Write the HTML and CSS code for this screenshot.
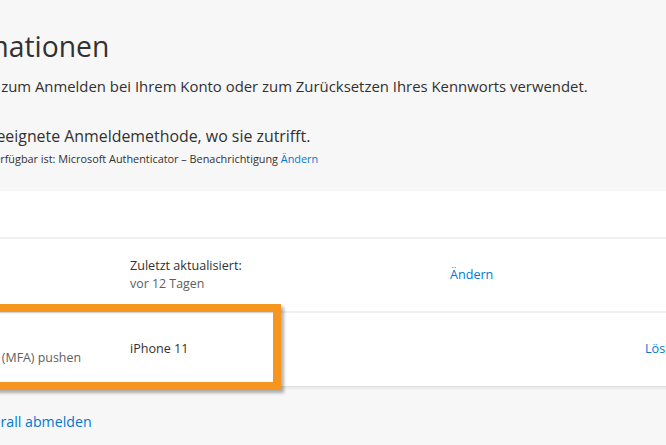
FILE: index.html
```html
<!DOCTYPE html>
<html lang="de">
<head>
<meta charset="utf-8">
<title>Sicherheitsinformationen</title>
<link rel="stylesheet" href="styles.css">
</head>
<body>
<main class="page">
  <h1 class="title">Sicherheitsinformationen</h1>
  <p class="lead">Die folgenden Methoden werden zum Anmelden bei Ihrem Konto oder zum Zurücksetzen Ihres Kennworts verwendet.</p>
  <p class="advice">Sie verwenden die am besten geeignete Anmeldemethode, wo sie zutrifft.</p>
  <p class="fallback">Anmeldemethode, falls die optimale nicht verfügbar ist: Microsoft Authenticator – Benachrichtigung <a class="link" href="#">Ändern</a></p>

  <section class="card">
    <div class="row row-add">
      <a class="link" href="#">+ Anmeldemethode hinzufügen</a>
    </div>
    <div class="row">
      <div class="cell">Kennwort</div>
      <div class="cell">
        <div>Zuletzt aktualisiert:</div>
        <div class="muted">vor 12 Tagen</div>
      </div>
      <div class="cell"><a class="link" href="#">Ändern</a></div>
      <div class="cell"></div>
    </div>
    <div class="row row-marked">
      <div class="cell">
        <div>Microsoft Authenticator</div>
        <div class="muted">Mehrstufige Authentifizierung (MFA) pushen</div>
      </div>
      <div class="cell">iPhone 11</div>
      <div class="cell"></div>
      <div class="cell"><a class="link" href="#">Löschen</a></div>
      <div class="marker"></div>
    </div>
  </section>

  <p class="lost">Haben Sie Ihr Gerät verloren? <a class="link" href="#">Überall abmelden</a></p>
</main>
</body>
</html>
```
FILE: styles.css
```css
html, body {
  margin: 0;
  height: 100%;
  overflow: hidden;
}
body {
  background: #f7f7f7;
  color: #323130;
  font-family: "Open Sans", "Noto Sans", sans-serif;
}
.page {
  margin-left: -225px;
  padding-top: 28px;
  width: 1100px;
}
.title {
  margin: 0;
  font-size: 28.3px;
  line-height: 36px;
  font-weight: 400;
  white-space: nowrap;
}
.lead {
  margin: 12px 0 0 -6.5px;
  font-size: 14.9px;
  line-height: 20px;
  white-space: nowrap;
}
.advice {
  margin: 28.5px 0 0 -9px;
  font-size: 15.9px;
  line-height: 22px;
  white-space: nowrap;
}
.fallback {
  margin: 4.5px 0 0;
  font-size: 10.875px;
  line-height: 16px;
  white-space: nowrap;
}
.link {
  color: #0078d4;
  text-decoration: none;
}
.card {
  margin-top: 23.5px;
  background: #fff;
  box-shadow: 0 1.6px 3.6px rgba(0, 0, 0, 0.13), 0 0.3px 0.9px rgba(0, 0, 0, 0.11);
  font-size: 12.6px;
  line-height: 18px;
}
.row {
  position: relative;
  display: grid;
  grid-template-columns: 304px 320px 195px 1fr;
  align-items: center;
  padding-left: 51px;
  height: 72px;
  border-top: 2px solid #f0f0f0;
  white-space: nowrap;
}
.row-add {
  display: flex;
  padding-left: 24px;
  height: 46px;
  border-top: 0;
}
.row-marked {
  height: 73px;
}
.muted {
  color: #605e5c;
  font-size: 12.4px;
}
.marker {
  position: absolute;
  left: 195px;
  top: -9px;
  width: 311px;
  height: 86px;
  box-sizing: border-box;
  border: 8px solid #f7961f;
  box-shadow: 3px 3px 3px rgba(0, 0, 0, 0.3), inset 1px 1px 2px rgba(0, 0, 0, 0.15);
  pointer-events: none;
}
.lost {
  margin: 26px 0 0;
  font-size: 14.2px;
  line-height: 20px;
  white-space: nowrap;
}
```
